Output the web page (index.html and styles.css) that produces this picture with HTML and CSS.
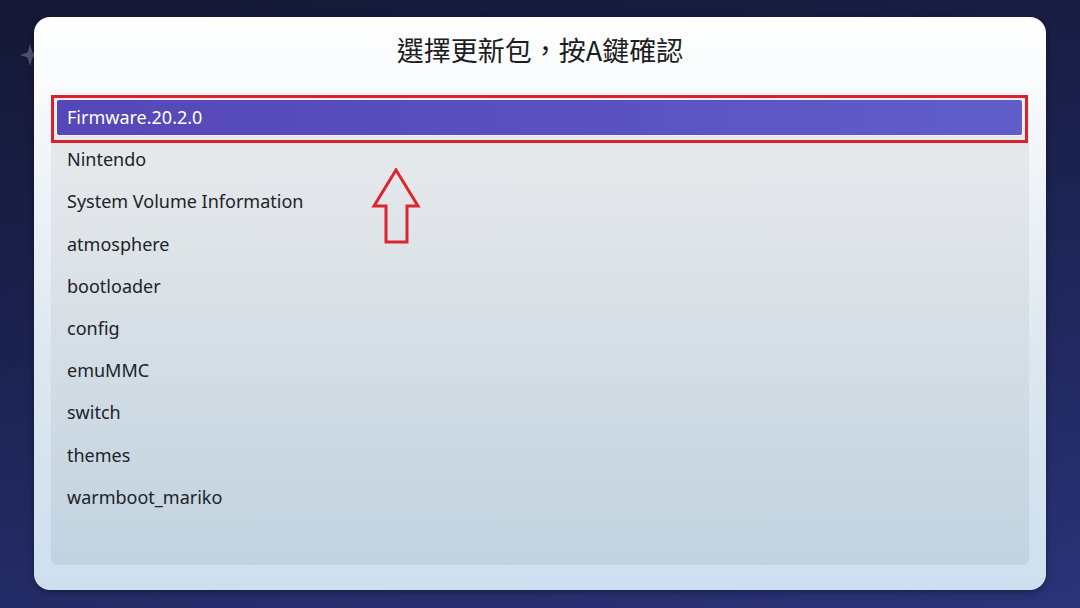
FILE: index.html
```html
<!DOCTYPE html>
<html lang="zh-Hant">
<head>
<meta charset="utf-8">
<title>選擇更新包</title>
<link rel="stylesheet" href="styles.css">
</head>
<body>
<div class="screen">
  <svg class="sparkle" width="20" height="22" viewBox="0 0 20 22"><path d="M10 0 L12.5 8.5 L20 11 L12.5 13.5 L10 22 L7.5 13.5 L0 11 L7.5 8.5 Z" fill="#7d8299"/></svg>
  <div class="panel">
    <div class="header">選擇更新包，按A鍵確認</div>
    <div class="list">
      <div class="mark"></div>
      <svg class="arrow" width="52" height="78" viewBox="0 0 52 78">
        <path d="M25 2 L47 38 L36 38 L36 74 L15 74 L15 38 L3 38 Z" fill="none" stroke="#dd2430" stroke-width="3" stroke-linejoin="miter"/>
      </svg>
      <div class="row selected"><span class="bar">Firmware.20.2.0</span></div>
      <div class="row">Nintendo</div>
      <div class="row">System Volume Information</div>
      <div class="row">atmosphere</div>
      <div class="row">bootloader</div>
      <div class="row">config</div>
      <div class="row">emuMMC</div>
      <div class="row">switch</div>
      <div class="row">themes</div>
      <div class="row">warmboot_mariko</div>
    </div>
  </div>
</div>
</body>
</html>
```

FILE: styles.css
```css
html, body {
  margin: 0;
  padding: 0;
}
body {
  width: 1080px;
  height: 608px;
  overflow: hidden;
  font-family: "Noto Sans", "Noto Sans CJK TC", sans-serif;
}
.screen {
  position: relative;
  width: 1080px;
  height: 608px;
  box-sizing: border-box;
  padding: 17px 34px 18px 34px;
  background: linear-gradient(170deg, #141834 0%, #1c2250 45%, #2a3378 100%);
}
.sparkle {
  position: absolute;
  left: 20px;
  top: 44px;
  opacity: 0.55;
}
.panel {
  position: relative;
  height: 573px;
  border-radius: 16px;
  background: linear-gradient(180deg, #ffffff 0%, #f5f8fa 18%, #dde7ef 60%, #cddfee 100%);
  display: flex;
  flex-direction: column;
  padding: 0 17px 25px 17px;
  box-sizing: border-box;
  box-shadow: 0 2px 6px rgba(0, 0, 0, 0.35);
}
.header {
  height: 78px;
  box-sizing: border-box;
  padding-top: 18px;
  line-height: 30px;
  text-align: center;
  font-family: "Noto Sans CJK SC", "Noto Sans CJK TC", sans-serif;
  font-size: 27px;
  color: #1c1d22;
}
.list {
  position: relative;
  flex: 1;
  border-radius: 6px;
  background: linear-gradient(180deg, #eaecee 0%, #dfe4e8 30%, #c9d7e2 80%, #c2d3df 100%);
  padding-top: 1px;
  display: flex;
  flex-direction: column;
}
.row {
  height: 42.2px;
  line-height: 42.2px;
  padding-left: 16px;
  font-size: 18px;
  color: #202329;
  white-space: nowrap;
}
.row.selected {
  padding: 4px 7px 3px 6px;
  box-sizing: border-box;
  line-height: normal;
}
.bar {
  display: block;
  height: 100%;
  line-height: 35px;
  box-sizing: border-box;
  padding-left: 10px;
  border-radius: 2px;
  color: #ffffff;
  background: linear-gradient(90deg, #5547b8 0%, #5a50bf 50%, #605dc9 100%);
  box-shadow: 0 0 0 1px #f4f0f6;
}
.mark {
  position: absolute;
  left: 0;
  right: 1px;
  top: 0;
  height: 48px;
  box-sizing: border-box;
  border: 3px solid #d8232e;
  pointer-events: none;
}
.arrow {
  position: absolute;
  left: 320px;
  top: 73px;
}
```
